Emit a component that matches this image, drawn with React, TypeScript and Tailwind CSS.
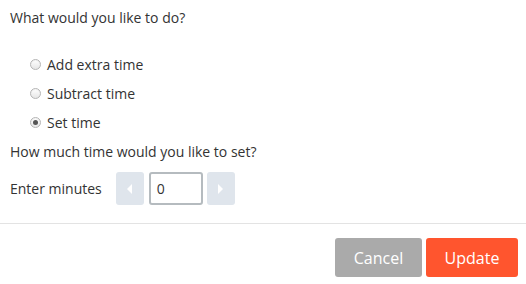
import React from "react";

function Radio({ label, checked }: { label: string; checked?: boolean }) {
  return (
    <div className="flex h-[29px] items-center pl-[20px]">
      <span className="flex h-[11px] w-[11px] items-center justify-center rounded-full border border-[#b5b5b5] bg-gradient-to-b from-[#ffffff] to-[#e6e6e6] shadow-[inset_0_1px_1px_rgba(0,0,0,0.05)]">
        {checked && <span className="h-[5px] w-[5px] rounded-full bg-[#555]" />}
      </span>
      <span className="ml-[6px] text-[14px] text-[#333]">{label}</span>
    </div>
  );
}

export default function App() {
  return (
    <div
      className="h-[284px] w-[526px] bg-white text-[#333]"
      style={{ fontFamily: "'Open Sans', 'Liberation Sans', sans-serif" }}
    >
      <div className="px-[10px] pt-[8px]">
        <div className="h-[20px] text-[14px] leading-[20px]">What would you like to do?</div>
        <div className="mt-[22px]">
          <Radio label="Add extra time" />
          <Radio label="Subtract time" />
          <Radio label="Set time" checked />
        </div>
        <div className="mt-[5px] h-[20px] text-[14px] leading-[20px]">How much time would you like to set?</div>
        <div className="mt-[10px] flex h-[33px] items-center">
          <span className="text-[14px]">Enter minutes</span>
          <button className="ml-[14px] flex h-[33px] w-[28px] items-center justify-center rounded-[3px] bg-[#dfe5ec]">
            <span className="h-0 w-0 border-y-[5px] border-r-[5px] border-y-transparent border-r-white" />
          </button>
          <div className="ml-[5px] flex h-[33px] w-[54px] items-center rounded-[3px] border-2 border-[#b5bbbf] px-[6px] text-[14px]">
            0
          </div>
          <button className="ml-[4px] flex h-[33px] w-[28px] items-center justify-center rounded-[3px] bg-[#dfe5ec]">
            <span className="h-0 w-0 border-y-[5px] border-l-[5px] border-y-transparent border-l-white" />
          </button>
        </div>
      </div>
      <div className="mt-[18px] h-px w-full bg-[#e3e3e3]" />
      <div className="flex justify-end gap-[4px] pr-[8px] pt-[14px]">
        <button className="h-[39px] w-[87px] rounded-[3px] bg-[#aaaaaa] text-[16px] text-white">Cancel</button>
        <button className="h-[39px] w-[92px] rounded-[3px] bg-[#ff552e] text-[16px] text-white">Update</button>
      </div>
    </div>
  );
}
